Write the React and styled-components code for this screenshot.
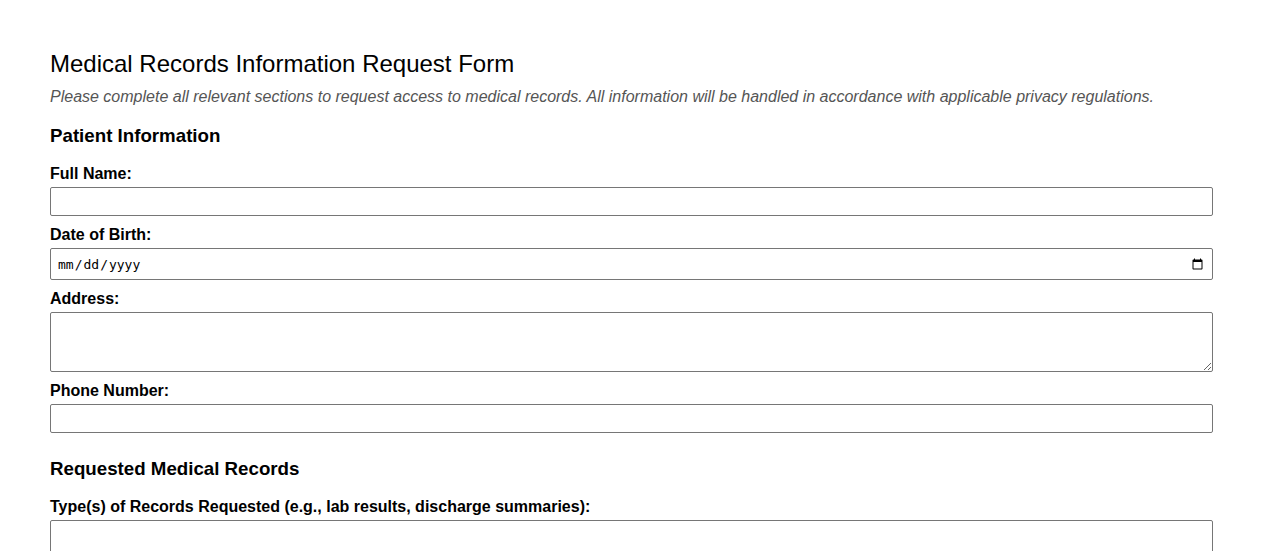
import React from "react";
import styled, { createGlobalStyle } from "styled-components";

const GlobalStyle = createGlobalStyle`
  body {
    margin: 0;
    background: #ffffff;
    font-family: "Liberation Sans", Arial, sans-serif;
    color: #000000;
  }
`;

const Page = styled.div`
  padding: 50px 50px 40px;
`;

const Title = styled.h1`
  margin: 0;
  font-size: 24px;
  font-weight: 400;
  line-height: 28px;
`;

const Intro = styled.p`
  margin: 10px 0 0;
  font-size: 16px;
  line-height: 18px;
  font-style: italic;
  color: #555555;
`;

const Section = styled.section`
  margin-top: ${(p) => p.$gap}px;
  display: flex;
  flex-direction: column;
`;

const SectionTitle = styled.h2`
  margin: 0 0 17px;
  padding-top: 1px;
  font-size: 18.72px;
  font-weight: 700;
  line-height: 22px;
`;

const Field = styled.div`
  display: flex;
  flex-direction: column;
  margin-bottom: 9px;
`;

const Label = styled.label`
  font-size: 16px;
  font-weight: 700;
  line-height: 18px;
  padding-top: 1px;
  margin-bottom: 4px;
`;

const Input = styled.input`
  box-sizing: border-box;
  width: 100%;
  height: ${(p) => p.$h || 29}px;
  margin: 0;
  padding: 4px 6px;
  border: 1px solid #767676;
  border-radius: 2px;
  font-family: "DejaVu Sans Mono", monospace;
  font-size: 13px;
  color: #000000;
  background: #ffffff;
`;

const Area = styled.textarea`
  box-sizing: border-box;
  width: 100%;
  height: 60px;
  margin: 0;
  padding: 4px 6px;
  border: 1px solid #767676;
  border-radius: 2px;
  font-family: "Liberation Sans", Arial, sans-serif;
  font-size: 13px;
  display: block;
`;

const App = () => {
  return (
    <>
      <GlobalStyle />
      <Page>
        <Title>Medical Records Information Request Form</Title>
        <Intro>
          Please complete all relevant sections to request access to medical records. All information will be handled in accordance with applicable privacy regulations.
        </Intro>
        <Section $gap={18}>
          <SectionTitle>Patient Information</SectionTitle>
          <Field>
            <Label htmlFor="fullName">Full Name:</Label>
            <Input id="fullName" type="text" />
          </Field>
          <Field>
            <Label htmlFor="dob">Date of Birth:</Label>
            <Input id="dob" type="date" $h={32} />
          </Field>
          <Field>
            <Label htmlFor="address">Address:</Label>
            <Area id="address" />
          </Field>
          <Field>
            <Label htmlFor="phone">Phone Number:</Label>
            <Input id="phone" type="tel" />
          </Field>
        </Section>
        <Section $gap={15}>
          <SectionTitle>Requested Medical Records</SectionTitle>
          <Field>
            <Label htmlFor="types">Type(s) of Records Requested (e.g., lab results, discharge summaries):</Label>
            <Area id="types" />
          </Field>
        </Section>
      </Page>
    </>
  );
};

export default App;
